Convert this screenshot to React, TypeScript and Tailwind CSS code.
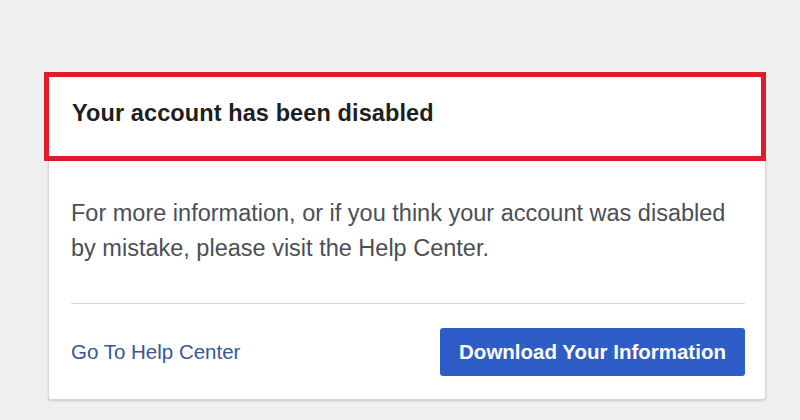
import React from 'react';

const DisabledNotice: React.FC = () => {
  return (
    <div className="flex flex-col w-[722px] ml-[44px] pt-[72px]">
      <div className="border-[5px] border-[#df1d2a] bg-white h-[89px] flex items-center pl-[23px] pb-[5px]">
        <h1 className="text-[23.5px] font-bold text-[#1c1e21] tracking-[0.1px]">Your account has been disabled</h1>
      </div>
      <div className="ml-[4px] bg-white border border-t-0 border-[#d6d7da] rounded-b-[3px] shadow-[0_1px_2px_rgba(0,0,0,0.15)] px-[22px] pt-[35px] pb-[23px]">
        <p className="text-[23.5px] leading-[35px] text-[#4b4f56]">
          For more information, or if you think your account was disabled by mistake, please visit the Help Center.
        </p>
        <div className="mt-[37px] border-t border-[#d8d9dc] mr-[-2px]" />
        <div className="flex items-center justify-between mt-[24px] mr-[-2px]">
          <a href="#" className="text-[20.5px] text-[#3a5795]">Go To Help Center</a>
          <button className="h-[48px] w-[305px] bg-[#2f5dc8] rounded-[3px] text-white font-bold text-[20.5px]">
            Download Your Information
          </button>
        </div>
      </div>
    </div>
  );
};

export default function App() {
  return (
    <div className="w-[800px] h-[420px] bg-[#efefef] overflow-hidden" style={{ fontFamily: '"Liberation Sans", Arial, sans-serif' }}>
      <DisabledNotice />
    </div>
  );
}
